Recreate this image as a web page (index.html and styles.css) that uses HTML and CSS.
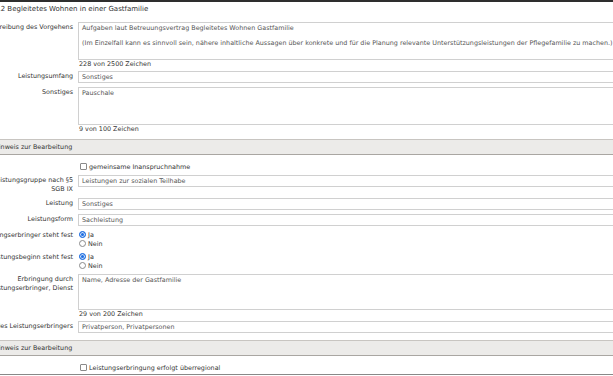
FILE: index.html
```html
<!DOCTYPE html>
<html lang="de">
<head>
    <meta charset="UTF-8">
    <meta name="viewport" content="width=device-width, initial-scale=1.0">
    <title>Begleitetes Wohnen in einer Gastfamilie</title>
    <link rel="stylesheet" href="styles.css">
</head>
<body>

    <div class="page">
        <h2 class="title">1.2 Begleitetes Wohnen in einer Gastfamilie</h2>

        <div class="row has-count">
            <label class="lbl" for="vorgehen">Beschreibung des Vorgehens</label>
            <div class="field">
                <textarea id="vorgehen" class="area">Aufgaben laut Betreuungsvertrag Begleitetes Wohnen Gastfamilie

(Im Einzelfall kann es sinnvoll sein, nähere inhaltliche Aussagen über konkrete und für die Planung relevante Unterstützungsleistungen der Pflegefamilie zu machen.)</textarea>
                <div class="count">228 von 2500 Zeichen</div>
            </div>
        </div>

        <div class="row">
            <label class="lbl" for="umfang">Leistungsumfang</label>
            <div class="field">
                <select id="umfang" class="sel"><option>Sonstiges</option></select>
            </div>
        </div>

        <div class="row has-count">
            <label class="lbl" for="sonstiges">Sonstiges</label>
            <div class="field">
                <textarea id="sonstiges" class="area">Pauschale</textarea>
                <div class="count">9 von 100 Zeichen</div>
            </div>
        </div>

        <div class="section">Hinweis zur Bearbeitung</div>

        <div class="row">
            <span class="lbl"></span>
            <div class="field">
                <label class="opt"><input type="checkbox" class="chk"> gemeinsame Inanspruchnahme</label>
            </div>
        </div>

        <div class="row">
            <label class="lbl" for="gruppe">Leistungsgruppe nach §5<br>SGB IX</label>
            <div class="field">
                <select id="gruppe" class="sel"><option>Leistungen zur sozialen Teilhabe</option></select>
            </div>
        </div>

        <div class="row">
            <label class="lbl" for="leistung">Leistung</label>
            <div class="field">
                <select id="leistung" class="sel"><option>Sonstiges</option></select>
            </div>
        </div>

        <div class="row">
            <label class="lbl" for="form">Leistungsform</label>
            <div class="field">
                <select id="form" class="sel"><option>Sachleistung</option></select>
            </div>
        </div>

        <div class="row">
            <span class="lbl">Leistungserbringer steht fest</span>
            <div class="field">
                <label class="opt"><input type="radio" name="erbringer" class="rad" checked>Ja</label>
                <label class="opt"><input type="radio" name="erbringer" class="rad">Nein</label>
            </div>
        </div>

        <div class="row">
            <span class="lbl">Leistungsbeginn steht fest</span>
            <div class="field">
                <label class="opt"><input type="radio" name="beginn" class="rad" checked>Ja</label>
                <label class="opt"><input type="radio" name="beginn" class="rad">Nein</label>
            </div>
        </div>

        <div class="row has-count">
            <label class="lbl" for="dienst">Erbringung durch Leistungserbringer, Dienst</label>
            <div class="field">
                <textarea id="dienst" class="area area-short">Name, Adresse der Gastfamilie</textarea>
                <div class="count">29 von 200 Zeichen</div>
            </div>
        </div>

        <div class="row">
            <label class="lbl" for="art">Art des Leistungserbringers</label>
            <div class="field">
                <select id="art" class="sel"><option>Privatperson, Privatpersonen</option></select>
            </div>
        </div>

        <div class="section">Hinweis zur Bearbeitung</div>

        <div class="row">
            <span class="lbl"></span>
            <div class="field">
                <label class="opt"><input type="checkbox" class="chk"> Leistungserbringung erfolgt überregional</label>
            </div>
        </div>
    </div>

</body>
</html>
```

FILE: styles.css
```css
body {
    margin: 0;
    background-color: #fff;
    font-family: "DejaVu Sans", Verdana, sans-serif;
    font-size: 6.4px;
    color: #333;
    overflow: hidden;
}

.page {
    width: 720px;
    margin-left: -25px;
    border-top: 2px solid #2e2e2e;
    border-bottom: 1px solid #888;
}

.title {
    margin: 0;
    height: 18px;
    padding: 3px 0 0 19px;
    box-sizing: border-box;
    font-size: 7px;
    font-weight: normal;
    line-height: 9px;
}

.row {
    display: grid;
    grid-template-columns: 103px 1fr;
    padding: 2px 0;
}

.row.has-count {
    padding-bottom: 0;
}

.lbl {
    text-align: right;
    padding: 1px 5px 0 0;
    line-height: 9px;
}

.area {
    display: block;
    width: 100%;
    height: 38px;
    margin: 0;
    padding: 2px 3px;
    box-sizing: border-box;
    border: 1px solid #d0d0d0;
    font: inherit;
    line-height: 7.5px;
    color: #555;
    resize: none;
    overflow: hidden;
}

.area-short {
    height: 36px;
}

.count {
    line-height: 9px;
    padding-left: 1px;
}

.sel {
    display: block;
    width: 100%;
    height: 12px;
    margin: 0;
    padding: 0 3px;
    box-sizing: border-box;
    border: 1px solid #d0d0d0;
    border-radius: 0;
    background-color: #fff;
    font: inherit;
    line-height: 10px;
    color: #555;
    appearance: none;
}

.section {
    margin: 5px 0;
    height: 14px;
    padding-left: 19px;
    line-height: 14px;
    background-color: #ecebe9;
    border-top: 1px solid #c8c5c1;
    border-bottom: 1px solid #a9a6a2;
}

.opt {
    display: flex;
    align-items: center;
    height: 9px;
    color: #333;
}

.chk {
    appearance: none;
    width: 7px;
    height: 7px;
    margin: 0 2px 0 2px;
    box-sizing: border-box;
    border: 1px solid #8a8a8a;
    border-radius: 1px;
    background-color: #fff;
}

.rad {
    appearance: none;
    width: 7px;
    height: 7px;
    margin: 0 2px 0 1px;
    box-sizing: border-box;
    border: 1px solid #8a8a8a;
    border-radius: 50%;
    background-color: #fff;
}

.rad:checked {
    border-color: #1e6ee0;
    background-color: #1e6ee0;
    box-shadow: inset 0 0 0 1px #cfe0fa;
}
```
